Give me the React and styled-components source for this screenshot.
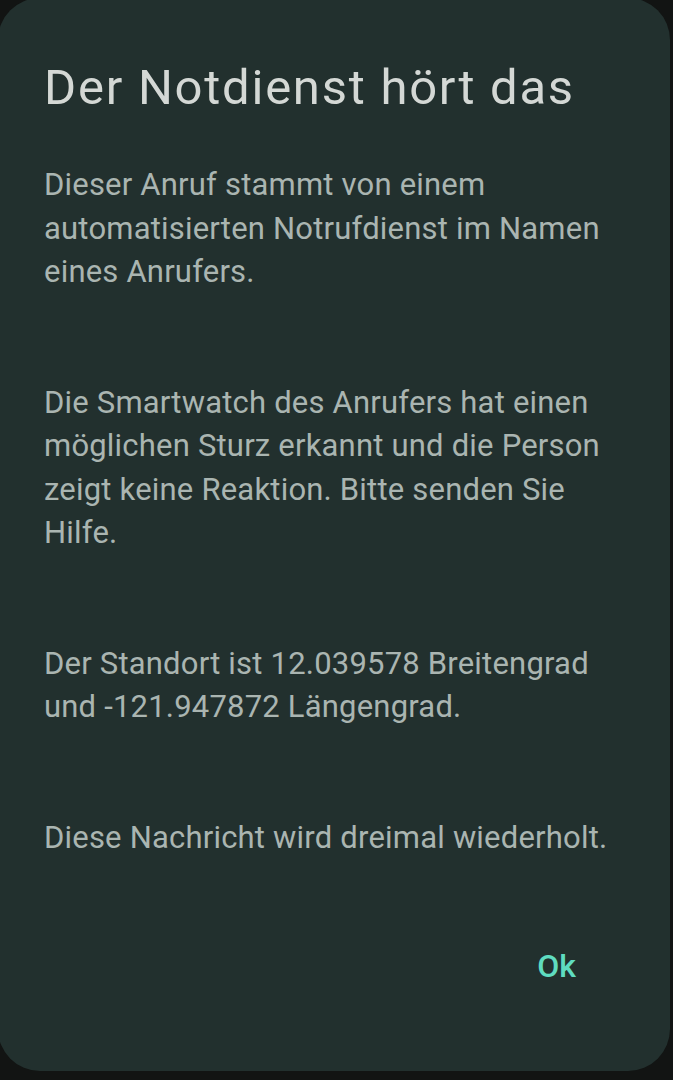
import React from "react";
import styled, { createGlobalStyle } from "styled-components";

const GlobalStyle = createGlobalStyle`
  html, body {
    margin: 0;
    padding: 0;
    background: #121413;
  }
  #root {
    width: 673px;
    height: 1080px;
    overflow: hidden;
  }
`;

const Screen = styled.div`
  width: 673px;
  height: 1080px;
  background: #121413;
  display: flex;
  align-items: flex-start;
  overflow: hidden;
`;

const Dialog = styled.div`
  box-sizing: border-box;
  width: 672px;
  height: 1073px;
  margin: -2px 0 0 -2px;
  background: #22302e;
  border-radius: 42px;
  padding: 60px 0 0 46px;
  display: flex;
  flex-direction: column;
  font-family: Roboto, "Noto Sans", sans-serif;
`;

const Title = styled.h1`
  margin: 0;
  font-weight: 400;
  font-size: 49px;
  letter-spacing: 1.75px;
  line-height: 60px;
  color: #d4d8d5;
`;

const Body = styled.div`
  margin-top: 45px;
  display: flex;
  flex-direction: column;
  gap: 87px;
`;

const Paragraph = styled.p`
  margin: 0;
  max-width: 580px;
  font-size: 31px;
  letter-spacing: 0.2px;
  line-height: 43.5px;
  color: #aab5b1;
`;

const Actions = styled.div`
  display: flex;
  justify-content: flex-end;
  margin-top: 88px;
  padding-right: 94px;
`;

const TextButton = styled.button`
  background: none;
  border: none;
  padding: 0;
  font-family: inherit;
  font-size: 32px;
  font-weight: 500;
  color: #5fdcc0;
  cursor: pointer;
`;

const paragraphs = [
  "Dieser Anruf stammt von einem automatisierten Notrufdienst im Namen eines Anrufers.",
  "Die Smartwatch des Anrufers hat einen möglichen Sturz erkannt und die Person zeigt keine Reaktion. Bitte senden Sie Hilfe.",
  "Der Standort ist 12.039578 Breitengrad und -121.947872 Längengrad.",
  "Diese Nachricht wird dreimal wiederholt.",
];

const App = () => {
  return (
    <>
      <GlobalStyle />
      <Screen>
        <Dialog>
          <Title>Der Notdienst hört das</Title>
          <Body>
            {paragraphs.map((text, index) => (
              <Paragraph key={index}>{text}</Paragraph>
            ))}
          </Body>
          <Actions>
            <TextButton>Ok</TextButton>
          </Actions>
        </Dialog>
      </Screen>
    </>
  );
};

export default App;
